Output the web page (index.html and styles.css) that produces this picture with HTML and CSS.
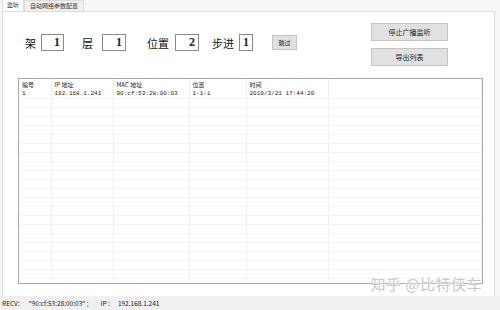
FILE: index.html
```html
<!DOCTYPE html>
<html>
<head>
  <meta charset="UTF-8" />
  <title>监听</title>
  <link rel="stylesheet" href="styles.css">
</head>
<body>
  <div class="window">
    <!-- tab strip -->
    <div class="tabs">
      <div class="tab active">监听</div>
      <div class="tab">自动网络参数配置</div>
    </div>

    <div class="panel">
      <div class="top">
        <div class="fields">
          <span class="lbl">架</span><span class="num n1">1</span>
          <span class="lbl l2">层</span><span class="num n2">1</span>
          <span class="lbl l3">位置</span><span class="num n3">2</span>
          <span class="lbl l4">步进</span><span class="num n4">1</span>
          <button class="btn skip">跳过</button>
        </div>
        <div class="actions">
          <button class="btn big">停止广播监听</button>
          <button class="btn big">导出列表</button>
        </div>
      </div>

      <!-- device list -->
      <div class="list">
        <table id="devices">
          <colgroup>
            <col style="width:32px"><col style="width:62px"><col style="width:76px">
            <col style="width:57px"><col style="width:82px"><col>
          </colgroup>
          <thead>
            <tr><th>编号</th><th>IP 地址</th><th>MAC 地址</th><th>位置</th><th>时间</th><th></th></tr>
          </thead>
          <tbody>
            <tr><td>1</td><td>192.168.1.241</td><td>90:cf:53:28:00:03</td><td>1-1-1</td><td>2019/3/21 17:44:20</td><td></td></tr>
          </tbody>
        </table>
      </div>
      <div class="mark">知乎 @比特侠车</div>
    </div>

    <div class="status">
      <span>RECV:</span><span class="recv">"90:cf:53:28:00:03" ;</span>
      <span class="ip">IP :</span><span>192.168.1.241</span>
    </div>
  </div>

  <script>
    // pad the list with empty rows like the grid control does
    const body = document.querySelector("#devices tbody");
    for (let i = 0; i < 20; i++) {
      const tr = document.createElement("tr");
      for (let c = 0; c < 6; c++) tr.appendChild(document.createElement("td"));
      body.appendChild(tr);
    }
  </script>
</body>
</html>
```

FILE: styles.css
```css
html, body {
  margin: 0;
  padding: 0;
}
body {
  width: 500px;
  height: 310px;
  background: #f7f7f7;
  font-family: "Noto Sans CJK SC", sans-serif;
  color: #222;
  overflow: hidden;
}
.window {
  display: flex;
  flex-direction: column;
  height: 310px;
}
.tabs {
  display: flex;
  height: 11px;
  padding-left: 2px;
  align-items: flex-end;
}
.tab {
  font-size: 6px;
  line-height: 10px;
  height: 10px;
  padding: 0 5px;
  background: #f0f0f0;
  border: 1px solid #dcdcdc;
  border-bottom: none;
  color: #333;
}
.tab.active {
  background: #fff;
  height: 11px;
  padding: 0 4px;
}
.panel {
  flex: 1;
  margin: 0 5px 0 2px;
  background: #fff;
  border: 1px solid #dcdcdc;
  border-bottom: none;
  position: relative;
}
.top {
  display: flex;
  justify-content: space-between;
  height: 66px;
}
.fields {
  display: flex;
  align-items: center;
  padding: 22px 0 0 22px;
  align-self: flex-start;
}
.lbl {
  font-family: "Noto Sans CJK SC", sans-serif;
  font-size: 11px;
  color: #111;
  margin-right: 5px;
}
.l2 { margin-left: 18px; margin-right: 9px; }
.l3 { margin-left: 21px; margin-right: 6px; }
.l4 { margin-left: 13px; margin-right: 5px; }
.num {
  display: inline-block;
  height: 15px;
  border: 1px solid #8a8a8a;
  font-family: "Liberation Serif", serif;
  font-weight: bold;
  font-size: 12px;
  line-height: 15px;
  text-align: right;
  padding-right: 3px;
}
.n1 { width: 18px; }
.n2 { width: 19px; }
.n3 { width: 19px; }
.n4 { width: 9px; }
.btn {
  font-family: "Noto Sans CJK SC", sans-serif;
  font-size: 6px;
  color: #222;
  background: #e1e1e1;
  border: 1px solid #c4c4c4;
  padding: 0;
  cursor: pointer;
}
.skip {
  width: 25px;
  height: 15px;
  margin-left: 19px;
}
.actions {
  display: flex;
  flex-direction: column;
  gap: 7px;
  padding: 11px 46px 0 0;
}
.big {
  width: 77px;
  height: 18px;
  font-size: 7px;
}
.list {
  margin: 0 11px 0 15px;
  height: 204px;
  border: 1px solid #a8a8a8;
  overflow: hidden;
}
table {
  border-collapse: collapse;
  table-layout: fixed;
  width: 100%;
  font-family: "Liberation Mono", "Noto Sans CJK SC", monospace;
  font-size: 6px;
  color: #222;
}
th, td {
  height: 8px;
  padding: 0 0 0 3px;
  border-right: 1px solid #eeeeee;
  border-bottom: 1px solid #f3f3f3;
  text-align: left;
  font-weight: normal;
  white-space: nowrap;
  line-height: 8px;
}
th {
  height: 10px;
  padding-top: 1px;
  font-family: "Noto Sans CJK SC", sans-serif;
  border-bottom: none;
}
/* watermark over the bottom right of the list */
.mark {
  position: absolute;
  right: 12px;
  bottom: 2px;
  font-size: 15px;
  line-height: 20px;
  color: #c8c8c8;
  letter-spacing: 0.5px;
  text-shadow: 0 0 2px #fff, 0 0 2px #fff;
}
.status {
  height: 14px;
  background: #f0f0f0;
  font-size: 6.5px;
  line-height: 14px;
  padding-left: 2px;
  display: flex;
  color: #222;
}
.status span { margin-right: 9px; }
.status .recv { margin-right: 12px; }
.status .ip { margin-right: 8px; }
```
